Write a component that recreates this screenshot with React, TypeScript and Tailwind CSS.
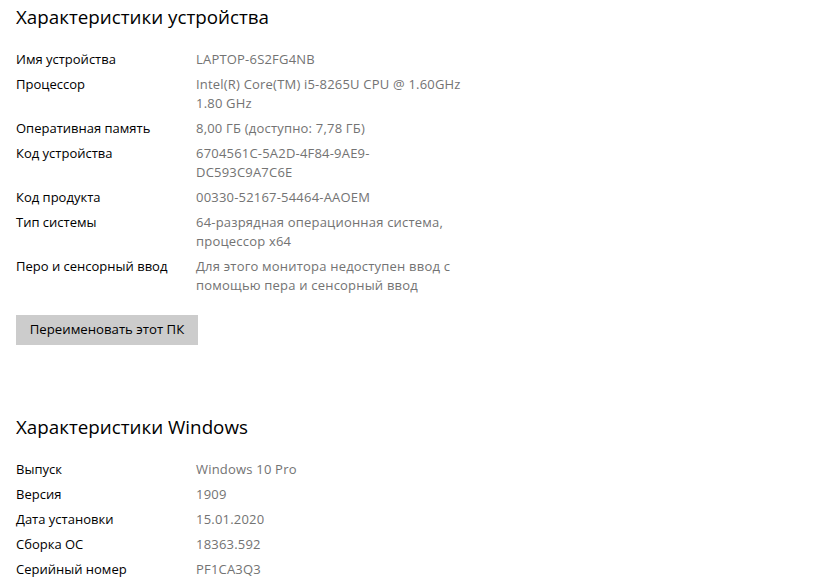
import React from "react";

type Row = { label: string; value: React.ReactNode };

const deviceRows: Row[] = [
  { label: "Имя устройства", value: "LAPTOP-6S2FG4NB" },
  {
    label: "Процессор",
    value: (
      <>
        Intel(R) Core(TM) i5-8265U CPU @ 1.60GHz
        <br />
        1.80 GHz
      </>
    ),
  },
  { label: "Оперативная память", value: "8,00 ГБ (доступно: 7,78 ГБ)" },
  {
    label: "Код устройства",
    value: (
      <>
        6704561C-5A2D-4F84-9AE9-
        <br />
        DC593C9A7C6E
      </>
    ),
  },
  { label: "Код продукта", value: "00330-52167-54464-AAOEM" },
  {
    label: "Тип системы",
    value: (
      <>
        64-разрядная операционная система,
        <br />
        процессор x64
      </>
    ),
  },
  {
    label: "Перо и сенсорный ввод",
    value: (
      <>
        Для этого монитора недоступен ввод с
        <br />
        помощью пера и сенсорный ввод
      </>
    ),
  },
];

const windowsRows: Row[] = [
  { label: "Выпуск", value: "Windows 10 Pro" },
  { label: "Версия", value: "1909" },
  { label: "Дата установки", value: "15.01.2020" },
  { label: "Сборка ОС", value: "18363.592" },
  { label: "Серийный номер", value: "PF1CA3Q3" },
];

const InfoList: React.FC<{ rows: Row[] }> = ({ rows }) => (
  <div className="flex flex-col gap-[6px]">
    {rows.map((row) => (
      <div key={row.label} className="flex text-[13px] leading-[19px]">
        <div className="w-[180px] shrink-0 text-black">{row.label}</div>
        <div className="tracking-[0.2px] text-[#737373]">{row.value}</div>
      </div>
    ))}
  </div>
);

export default function App() {
  return (
    <div
      className="w-[839px] h-[584px] overflow-hidden bg-white px-4"
      style={{ fontFamily: '"Open Sans", "Noto Sans", sans-serif' }}
    >
      <h1 className="pt-[3px] text-[18.8px] leading-[28px] text-black">
        Характеристики устройства
      </h1>
      <div className="mt-[19px]">
        <InfoList rows={deviceRows} />
      </div>
      <button
        type="button"
        className="mt-[20px] h-[30px] w-[182px] bg-[#cccccc] text-[13.2px] text-black"
      >
        Переименовать этот ПК
      </button>
      <h2 className="mt-[68px] text-[18.8px] leading-[28px] text-black">
        Характеристики Windows
      </h2>
      <div className="mt-[19px]">
        <InfoList rows={windowsRows} />
      </div>
    </div>
  );
}
